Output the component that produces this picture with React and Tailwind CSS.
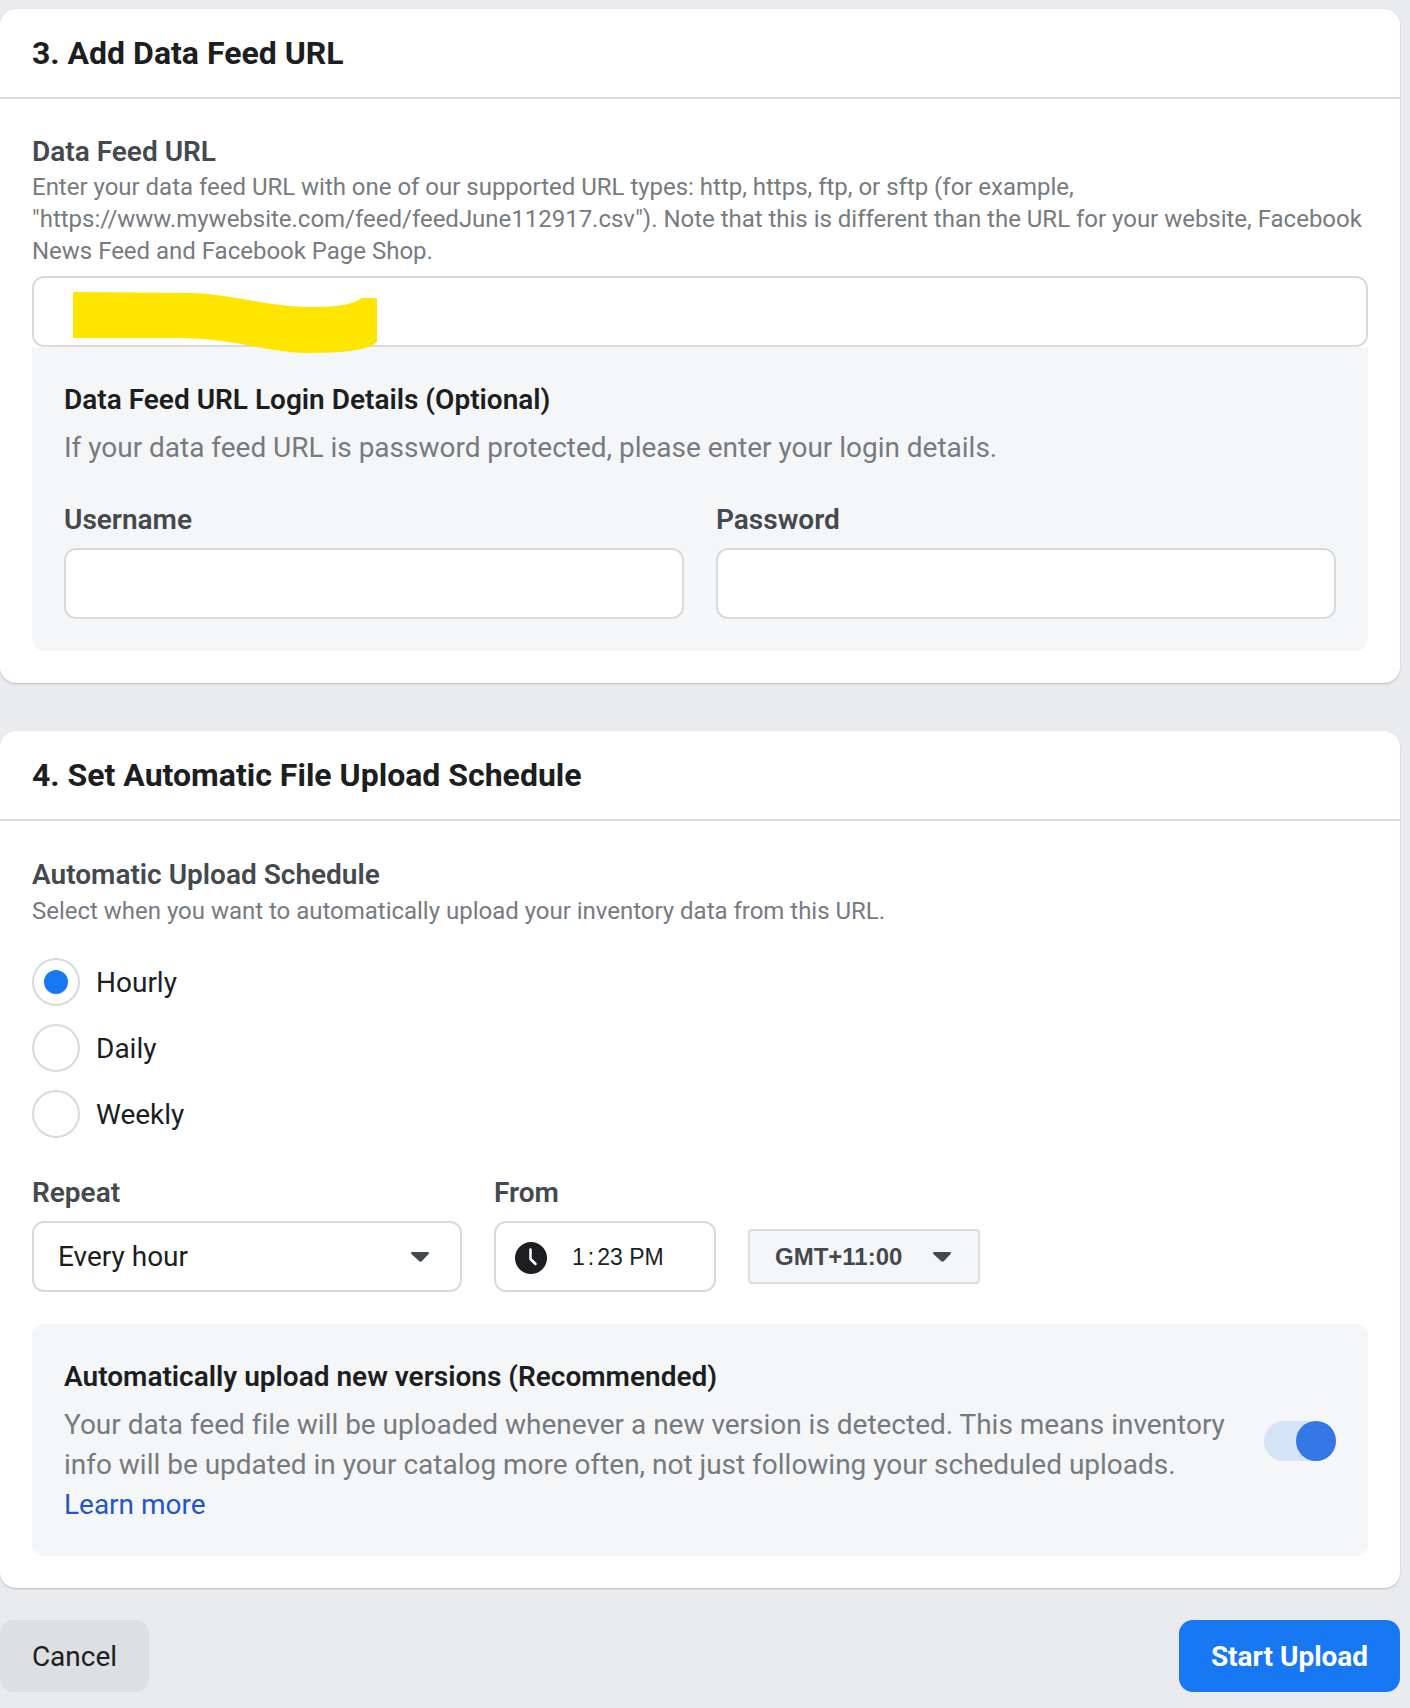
import { useState } from 'react';

const Caret = ({ className }) => (
    <svg viewBox="0 0 18 10" className={className} fill="currentColor">
        <path d="M1.2 0h15.6c1 0 1.5 1.1.8 1.9l-6.6 7.2c-1 1-2 1-3 0L.4 1.9C-.3 1.1.2 0 1.2 0z" />
    </svg>
);

const ClockIcon = () => (
    <svg viewBox="0 0 32 32" className="w-8 h-8 shrink-0">
        <circle cx="16" cy="16" r="16" fill="#1c1e21" />
        <path d="M15.5 7.5v9.5l5 5" fill="none" stroke="#fff" strokeWidth="2.5" strokeLinecap="round" strokeLinejoin="round" />
    </svg>
);

const Radio = ({ label, checked }) => (
    <label className="flex items-center h-12 gap-4">
        <span className="w-12 h-12 rounded-full border-2 border-[#d8dadd] bg-white flex items-center justify-center">
            {checked && <span className="w-6 h-6 rounded-full bg-[#1877f2]"></span>}
        </span>
        <span className="text-[28px] leading-8 pt-0.5 text-[#1c1e21]">{label}</span>
    </label>
);

const TextInput = () => (
    <input type="text" className="block w-full h-[71px] bg-white rounded-xl border-2 border-[#d8dadd] outline-none" />
);

const App = () => {
    const [autoUpload, setAutoUpload] = useState(true);

    return (
        <div className="w-[1410px] min-h-[1708px] bg-[#e9ebee] pt-[9px] pr-[10px] pb-4 font-['Roboto',sans-serif]">
            {/* Step 3 */}
            <section className="bg-white rounded-2xl shadow-[0_1px_2px_rgba(0,0,0,0.2)] pb-8">
                <h2 className="h-[90px] px-8 flex items-center text-[32px] font-bold text-[#1c1e21] border-b-2 border-[#dadde1]">3. Add Data Feed URL</h2>
                <div className="px-8 pt-[37px]">
                    <h3 className="text-[28px] leading-8 font-semibold text-[#444950]">Data Feed URL</h3>
                    <p className="text-2xl leading-8 tracking-[-0.015px] text-[#777b80] mt-[3px] mb-[9px]">
                        Enter your data feed URL with one of our supported URL types: http, https, ftp, or sftp (for example,<br />
                        "https://www.mywebsite.com/feed/feedJune112917.csv"). Note that this is different than the URL for your website, Facebook<br />
                        News Feed and Facebook Page Shop.
                    </p>
                    <div className="relative">
                        <TextInput />
                        <svg viewBox="0 0 304 62" className="absolute left-[41px] top-4 w-[304px] h-[62px] z-10">
                            <path d="M0 0 L120 1 C165 3 195 15 240 15 C268 15 280 12 289 6 L304 6 L304 50 C295 58 275 61 230 61 C185 58 160 47 110 46 L0 46 Z" fill="#ffe600" />
                        </svg>
                    </div>
                    <div className="bg-[#f5f6f7] rounded-b-xl p-8 pt-[33px]">
                        <h4 className="text-[28px] leading-10 font-semibold text-[#1c1e21]">Data Feed URL Login Details (Optional)</h4>
                        <p className="text-[28px] leading-10 tracking-[-0.015px] mt-2 text-[#777b80]">If your data feed URL is password protected, please enter your login details.</p>
                        <div className="grid grid-cols-2 gap-8 mt-8">
                            <div>
                                <label className="block text-[28px] leading-10 font-semibold text-[#444950] mb-2">Username</label>
                                <TextInput />
                            </div>
                            <div>
                                <label className="block text-[28px] leading-10 font-semibold text-[#444950] mb-2">Password</label>
                                <TextInput />
                            </div>
                        </div>
                    </div>
                </div>
            </section>

            {/* Step 4 */}
            <section className="bg-white rounded-2xl shadow-[0_1px_2px_rgba(0,0,0,0.2)] mt-12 pb-8">
                <h2 className="h-[90px] px-8 flex items-center text-[32px] font-bold text-[#1c1e21] border-b-2 border-[#dadde1]">4. Set Automatic File Upload Schedule</h2>
                <div className="px-8 pt-[38px]">
                    <h3 className="text-[28px] leading-8 font-semibold text-[#444950]">Automatic Upload Schedule</h3>
                    <p className="text-2xl leading-8 tracking-[-0.015px] text-[#777b80] mt-1">Select when you want to automatically upload your inventory data from this URL.</p>
                    <div className="flex flex-col gap-[18px] mt-[31px]">
                        <Radio label="Hourly" checked />
                        <Radio label="Daily" />
                        <Radio label="Weekly" />
                    </div>
                    <div className="flex items-end mt-[35px]">
                        <div className="w-[430px]">
                            <label className="block text-[28px] leading-10 font-semibold text-[#444950] mb-2">Repeat</label>
                            <div className="h-[71px] rounded-xl border-2 border-[#d8dadd] flex items-center justify-between pl-6 pr-[31px]">
                                <span className="text-[28px] text-[#1c1e21]">Every hour</span>
                                <Caret className="w-[18px] h-[10px] text-[#444950]" />
                            </div>
                        </div>
                        <div className="w-[222px] ml-8">
                            <label className="block text-[28px] leading-10 font-semibold text-[#444950] mb-2">From</label>
                            <div className="h-[71px] rounded-xl border-2 border-[#d8dadd] flex items-center pl-[19px] pt-0.5 gap-[25px]">
                                <ClockIcon />
                                <span className="text-[23px] text-[#1c1e21] font-['Liberation_Sans',sans-serif] whitespace-nowrap">
                                    1<span className="mx-[3px]">:</span>23 PM
                                </span>
                            </div>
                        </div>
                        <div className="w-[232px] h-[55px] ml-8 mb-2 rounded-[4px] border-2 border-[#dadde1] bg-[#f5f6f7] flex items-center pl-[25px] gap-[31px]">
                            <span className="text-2xl font-bold text-[#444950] font-['Liberation_Sans',sans-serif]">GMT+11:00</span>
                            <Caret className="w-[18px] h-[10px] text-[#444950]" />
                        </div>
                    </div>
                    <div className="bg-[#f5f6f7] rounded-xl mt-8 px-8 pt-[33px] pb-[31px] flex items-center gap-8">
                        <div className="flex-1">
                            <h4 className="text-[28px] leading-10 font-semibold text-[#1c1e21]">Automatically upload new versions (Recommended)</h4>
                            <p className="text-[28px] leading-10 tracking-[-0.015px] mt-2 text-[#777b80]">
                                Your data feed file will be uploaded whenever a new version is detected. This means inventory<br />
                                info will be updated in your catalog more often, not just following your scheduled uploads.<br />
                                <a href="#" className="text-[#2457c5]">Learn more</a>
                            </p>
                        </div>
                        <button
                            type="button"
                            onClick={() => setAutoUpload(!autoUpload)}
                            className={`w-[72px] h-10 rounded-full bg-[#d5e3f6] flex items-center ${autoUpload ? 'justify-end' : 'justify-start'}`}
                        >
                            <span className="w-10 h-10 rounded-full bg-[#3578e5]"></span>
                        </button>
                    </div>
                </div>
            </section>

            {/* Footer actions */}
            <div className="flex justify-between mt-8">
                <button type="button" className="h-[72px] w-[149px] pt-0.5 rounded-[14px] bg-[#dddfe3] text-[28px] text-[#1c1e21]">Cancel</button>
                <button type="button" className="h-[72px] w-[221px] pt-0.5 rounded-[14px] bg-[#1877f2] text-[28px] font-bold text-white">Start Upload</button>
            </div>
        </div>
    );
};

export default App;
